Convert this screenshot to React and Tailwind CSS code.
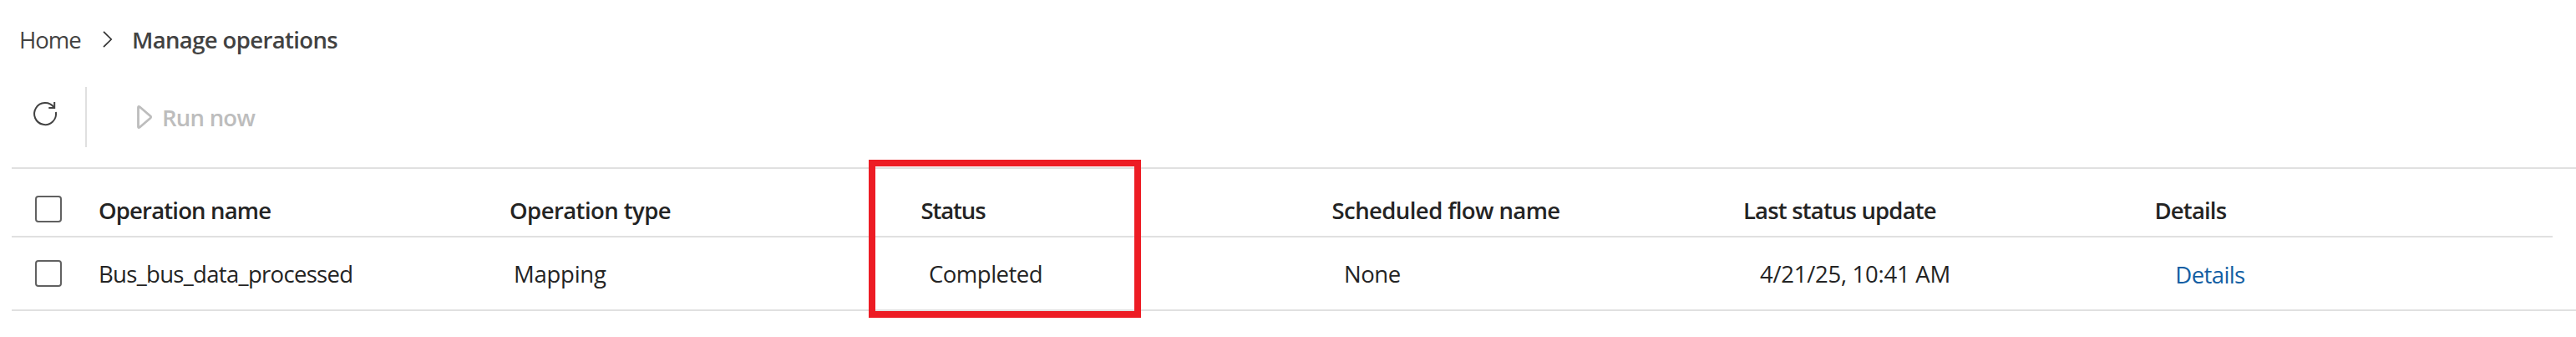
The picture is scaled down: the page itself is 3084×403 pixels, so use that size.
function RefreshIcon() {
  return (
    <svg className="h-8 w-8" viewBox="0 0 32 32" fill="none" stroke="#424242" strokeWidth="2">
      <path d="M28.9 14 A13 13 0 1 1 26.4 8.2" />
      <path d="M27.2 2 V9 H20.3" />
    </svg>
  );
}

function ChevronIcon() {
  return (
    <svg className="h-6 w-3" viewBox="0 0 12 24" fill="none" stroke="#333333" strokeWidth="1.7">
      <path d="M1 2.8 L10.2 12 L1 21.2" />
    </svg>
  );
}

function PlayIcon() {
  return (
    <svg className="h-8 w-5" viewBox="0 0 20 32" fill="none" stroke="#bdbdbd" strokeWidth="2.8" strokeLinejoin="round">
      <path d="M1.5 4.2 Q1.7 2.8 3.2 3.8 L16 14.7 Q17.2 16 16 17.3 L3.2 28.2 Q1.7 29.2 1.5 27.8 Z" />
    </svg>
  );
}

function Checkbox() {
  return <span className="block h-8 w-8 rounded-[4px] border-2 border-[#616161] bg-white" role="checkbox" aria-checked="false" />;
}

const headers = [
  { text: "Operation name", style: "tracking-[-0.83px]" },
  { text: "Operation type", style: "tracking-[-0.57px]" },
  { text: "Status", style: "tracking-[-1.12px]" },
  { text: "Scheduled flow name", style: "tracking-[-0.57px]" },
  { text: "Last status update", style: "tracking-[-0.83px]" },
  { text: "Details", style: "tracking-[-0.83px]" },
];

const cells = [
  { text: "Bus_bus_data_processed", style: "tracking-[-0.69px]" },
  { text: "Mapping", style: "tracking-[-0.25px]" },
  { text: "Completed", style: "tracking-[-0.5px]" },
  { text: "None", style: "tracking-[-0.47px]" },
  { text: "4/21/25, 10:41 AM", style: "tracking-[-0.27px]" },
];

export default function App() {
  return (
    <main className="relative flex h-[403px] w-[3084px] flex-col overflow-hidden bg-white font-['Open_Sans','Noto_Sans',sans-serif] text-[27.5px] leading-10 whitespace-nowrap text-[#242424]">
      <nav className="flex h-[104px] items-start pt-7 pl-[23px] text-[#424242]">
        <span className="w-[100px] tracking-[-1px]">Home</span>
        <span className="w-[35px] pt-[7px]">
          <ChevronIcon />
        </span>
        <span className="font-semibold tracking-[-0.63px]">Manage operations</span>
      </nav>

      <div className="flex h-[96px] items-start pl-[38px]">
        <button className="mt-4 h-8 w-8">
          <RefreshIcon />
        </button>
        <span className="ml-8 h-[72px] w-[2px] bg-[#e0e0e0]" />
        <button className="mt-[17px] ml-[60px] flex items-start gap-[10px] text-[#bdbdbd]">
          <span className="pt-[3px]">
            <PlayIcon />
          </span>
          <span className="font-semibold tracking-[-0.75px]">Run now</span>
        </button>
      </div>

      <section className="ml-[14px] border-y-2 border-[#e0e0e0]">
        <header className="mr-7 flex h-[82px] border-b-2 border-[#e0e0e0] pl-7 font-semibold">
          <div className="w-[76px] pt-8">
            <Checkbox />
          </div>
          <div className="grid grid-cols-[492px_492.5px_492px_492.5px_492.5px_auto] pt-[30px]">
            {headers.map((h) => (
              <span key={h.text} className={h.style}>{h.text}</span>
            ))}
          </div>
        </header>
        <div className="flex h-[86px] pl-7">
          <div className="w-[76px] pt-[27px]">
            <Checkbox />
          </div>
          <div className="grid grid-cols-[497px_497px_497px_498px_497.3px_auto] pt-6">
            {cells.map((c) => (
              <span key={c.text} className={c.style}>{c.text}</span>
            ))}
            <a className="pt-px tracking-[-0.6px] text-[#115ea3]">Details</a>
          </div>
        </div>
      </section>

      <div className="absolute top-[191px] left-[1040px] h-[189px] w-[326px] border-8 border-[#ed1c24]" />
    </main>
  );
}
